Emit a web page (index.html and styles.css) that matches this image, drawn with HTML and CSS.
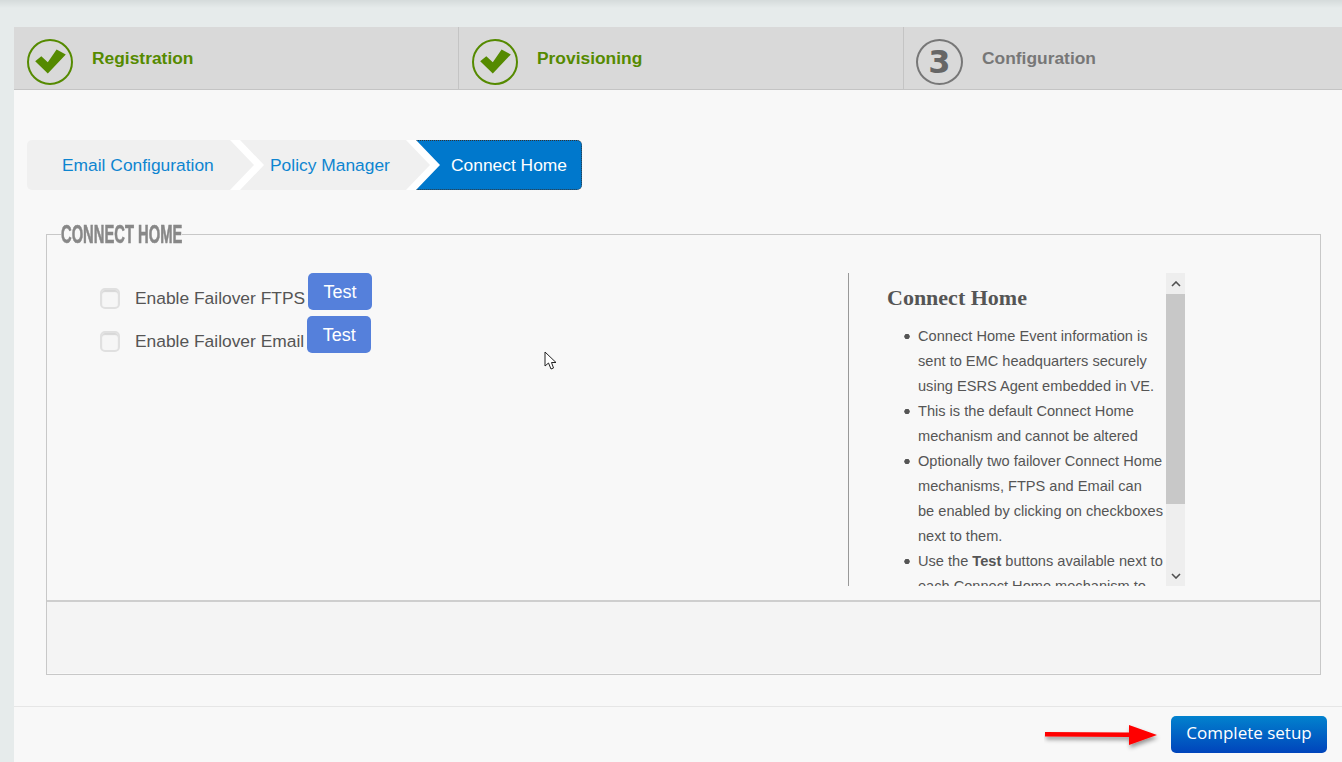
FILE: index.html
```html
<!DOCTYPE html>
<html>
<head>
<title>Connect Home</title>
<meta charset="utf-8" />
<link rel="stylesheet" href="styles.css">
</head>
<body>
<div class="main">
  <!-- top steps -->
  <ul class="steps">
    <li class="step done">
      <span class="circle">
        <svg width="46" height="46" viewBox="0 0 46 46"><polygon points="8.2,22.2 20.8,34.5 38.8,15.5 29.6,10.5 20.8,23.2 14.3,17.2" fill="#558a00"/></svg>
      </span>
      <span class="step-name">Registration</span>
    </li>
    <li class="step done">
      <span class="circle">
        <svg width="46" height="46" viewBox="0 0 46 46"><polygon points="8.2,22.2 20.8,34.5 38.8,15.5 29.6,10.5 20.8,23.2 14.3,17.2" fill="#558a00"/></svg>
      </span>
      <span class="step-name">Provisioning</span>
    </li>
    <li class="step">
      <span class="circle">3</span>
      <span class="step-name">Configuration</span>
    </li>
  </ul>

  <!-- sub steps -->
  <div class="crumbs">
    <a class="crumb first" href="javascript:;">Email Configuration</a>
    <a class="crumb" href="javascript:;">Policy Manager</a>
    <a class="crumb active" href="javascript:;">Connect Home</a>
  </div>

  <fieldset class="box">
    <legend><span>Connect Home</span></legend>
    <div class="box-body">
      <div class="options">
        <div class="option">
          <span class="check"></span>
          <label>Enable Failover FTPS</label>
          <button class="test">Test</button>
        </div>
        <div class="option">
          <span class="check"></span>
          <label>Enable Failover Email</label>
          <button class="test">Test</button>
        </div>
      </div>
      <div class="help">
        <div class="help-text">
          <h3>Connect Home</h3>
          <ul>
            <li>Connect Home Event information is sent to EMC headquarters securely using ESRS Agent embedded in VE.</li>
            <li>This is the default Connect Home mechanism and cannot be altered</li>
            <li>Optionally two failover Connect Home mechanisms, FTPS and Email can<br />be enabled by clicking on checkboxes next to them.</li>
            <li>Use the <b>Test</b> buttons available next to each Connect Home mechanism to</li>
          </ul>
        </div>
        <div class="scrollbar">
          <span class="sb-btn">
            <svg width="10" height="6" viewBox="0 0 10 6"><polyline points="1,5 5,1 9,5" fill="none" stroke="#505050" stroke-width="1.6"/></svg>
          </span>
          <span class="sb-thumb"></span>
          <span class="sb-rest"></span>
          <span class="sb-btn">
            <svg width="10" height="6" viewBox="0 0 10 6"><polyline points="1,1 5,5 9,1" fill="none" stroke="#505050" stroke-width="1.6"/></svg>
          </span>
        </div>
      </div>
    </div>
    <div class="box-foot"></div>
  </fieldset>

  <div class="bottom">
    <svg class="red-arrow" width="126" height="36" viewBox="0 0 126 36">
      <defs>
        <filter id="sh" x="-10%" y="-50%" width="120%" height="200%">
          <feDropShadow dx="1" dy="3" stdDeviation="2" flood-color="#000" flood-opacity="0.4"/>
        </filter>
      </defs>
      <polygon points="1,13 85,13.500 85,6 113,16 85,26 85,18 1,17.500" fill="#f00" filter="url(#sh)"/>
    </svg>
    <button class="finish">Complete setup</button>
  </div>
</div>

<!-- mouse pointer caught in the shot -->
<svg class="pointer" width="14" height="21" viewBox="0 0 14 21">
  <path d="M1 1 L1 15 L4.500 12 L7 18 L9.500 17 L7.500 11.500 L12 11.500 Z" fill="#fff" stroke="#222" stroke-width="1"/>
</svg>
</body>
</html>
```

FILE: styles.css
```css
*{
  margin:0;
  padding:0;
  box-sizing:border-box;
}
html,body{
  height:762px;
  overflow:hidden;
}
body{
  position:relative;
  background:linear-gradient(#d5dbdb,#e6ebeb 8px);
  font-family:"Liberation Sans",Arial,sans-serif;
  color:#555;
}
.main{
  margin:27px 0 0 14px;
  height:735px;
  background:#f8f8f8;
  overflow:hidden;
}

/* top steps */
.steps{
  display:flex;
  height:63px;
  list-style:none;
  background:#d9d9d9;
  border-bottom:1px solid #c4c4c4;
}
.step{
  flex:0 0 445px;
  display:flex;
  align-items:flex-start;
  padding:12px 0 0 13px;
  border-right:1px solid #c4c4c4;
  color:#777;
}
.step:last-child{
  flex:1;
  padding-left:12px;
  border-right:0;
}
.circle{
  flex:none;
  width:46px;
  height:46px;
  border:2px solid #777;
  border-radius:50%;
  display:flex;
  align-items:center;
  justify-content:center;
  font:bold 32px "DejaVu Sans",sans-serif;
  color:#666;
}
.step:last-child .circle{
  width:47px;
}
.circle svg{
  flex:none;
  margin:-2px;
}
.step-name{
  margin:9px 0 0 19px;
  font-size:17.4px;
  font-weight:bold;
}
.done{
  color:#558a00;
}
.done .circle{
  border-color:#558a00;
}

/* sub steps, white shows through the gaps between the arrows */
.crumbs{
  display:flex;
  margin:50px 0 0 13px;
  height:50px;
  background:linear-gradient(90deg,transparent 200px,#fff 200px,#fff 415px,transparent 415px);
}
.crumb{
  height:50px;
  line-height:50px;
  font-size:17.4px;
  text-decoration:none;
  color:#0e85d0;
  background:#f0f0f0;
  margin-left:-14px;
  padding-left:30px;
  width:190px;
  clip-path:polygon(0 0,166px 0,190px 25px,166px 50px,0 50px,24px 25px);
}
.first{
  width:227px;
  margin-left:0;
  padding-left:35px;
  border-radius:5px 0 0 5px;
  clip-path:polygon(0 0,203px 0,227px 25px,203px 50px,0 50px);
}
.active{
  width:166px;
  padding-left:35px;
  line-height:48px;
  color:#fff;
  background:#0078cc;
  border:1px dotted #333;
  border-left:0;
  border-radius:0 5px 5px 0;
  clip-path:polygon(0 0,100% 0,100% 100%,0 100%,24px 25px);
}

/* connect home box */
.box{
  width:1275px;
  height:455px;
  margin:30px 0 0 32px;
  border:1px solid #c8c8c8;
}
.box legend{
  margin-left:14px;
  width:121px;
  height:28px;
}
/* no condensed face is installed, so squeeze the bold one */
.box legend span{
  display:block;
  white-space:nowrap;
  font-size:25px;
  font-weight:bold;
  line-height:28px;
  text-transform:uppercase;
  color:#888;
  -webkit-text-stroke:.6px #888;
  transform:scaleX(.59);
  transform-origin:left;
}
.box-body{
  display:flex;
  height:352px;
  padding-top:25px;
}
.box-foot{
  height:73px;
  background:#f4f4f4;
  border-top:2px solid #cecece;
}
.options{
  width:801px;
  padding-left:53px;
}
.option{
  display:flex;
  align-items:flex-start;
  height:37px;
  margin-bottom:6px;
}
.check{
  flex:none;
  width:20px;
  height:21px;
  margin-top:15px;
  background:#f6f6f6;
  border:2px solid #e0e0e0;
  border-radius:5px;
  box-shadow:inset 0 2px 1px #d8d8d8;
}
.option label{
  margin:15px 3px 0 15px;
  font-size:17.4px;
  line-height:21px;
  color:#555;
}
.test{
  flex:none;
  width:64px;
  height:37px;
  padding-top:2px;
  border:0;
  border-radius:5px;
  background:#5580db;
  color:#fff;
  font:18px "Liberation Sans",sans-serif;
}

/* help text with its scrollbar */
.help{
  display:flex;
  width:337px;
  height:313px;
  border-left:1px solid #999;
  overflow:hidden;
}
.help-text{
  width:317px;
  flex:none;
  padding-left:38px;
}
.help h3{
  margin-top:10px;
  font:bold 22px/30px "Liberation Serif",serif;
  color:#555;
}
.help ul{
  margin-top:11px;
  padding-left:17px;
  list-style:none;
  font-size:14.6px;
  line-height:25px;
}
/* the browser's bullet is too small at this size */
.help li{
  padding-left:14px;
  background:radial-gradient(circle at 3px 12.5px,#555 2.4px,transparent 3px);
}
.scrollbar{
  flex:none;
  width:19px;
  display:flex;
  flex-direction:column;
  background:#eee;
}
.sb-btn{
  flex:none;
  height:21px;
  display:flex;
  align-items:center;
  justify-content:center;
}
.sb-thumb{
  flex:none;
  height:210px;
  background:#c8c8c8;
}
.sb-rest{
  flex:1;
}

/* page bottom */
.bottom{
  display:flex;
  justify-content:flex-end;
  align-items:flex-start;
  height:56px;
  margin-top:31px;
  padding:9px 15px 0 0;
  border-top:1px solid #e6e6e6;
}
.red-arrow{
  flex:none;
  margin:3px 1px 0 0;
}
.finish{
  width:156px;
  height:37px;
  padding-bottom:5px;
  border:0;
  border-radius:5px;
  background:linear-gradient(#0282ce,#0044bb);
  color:#fff;
  font:17px "Open Sans",sans-serif;
}

.pointer{
  position:absolute;
  left:544px;
  top:351px;
}
```
